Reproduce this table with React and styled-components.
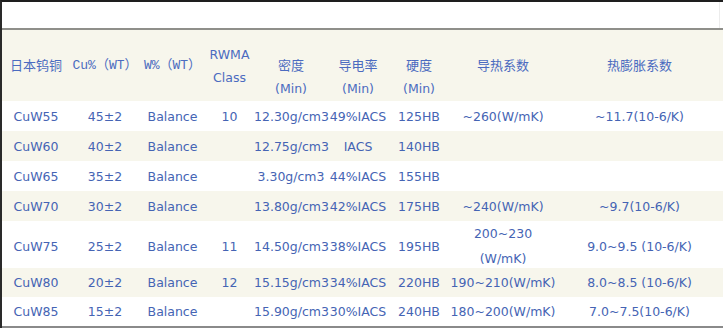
import React from 'react';
import styled, { createGlobalStyle } from 'styled-components';

const GlobalStyle = createGlobalStyle`
  html, body {
    margin: 0;
    padding: 0;
    background: #fff;
  }
  body {
    font-family: 'DejaVu Sans', 'Noto Sans CJK SC', sans-serif;
  }
`;

const COLUMNS = '68px 70px 65px 49px 74px 60px 62px 106px 1fr';

const StyledFrame = styled.div`
  width: 723px;
  height: 328px;
  box-sizing: border-box;
  border-top: 2px solid #1e1e1e;
  border-left: 2px solid #2a2a2a;
  display: flex;
  flex-direction: column;
  overflow: hidden;
`;

const StyledTopStrip = styled.div`
  height: 26px;
  flex-shrink: 0;
  border-right: 1px solid #ececec;
  margin-right: 3px;
`;

const StyledTable = styled.div`
  display: flex;
  flex-direction: column;
  border-top: 2px solid #8f8f8a;
  border-bottom: 2px solid #8a8a8a;
`;

const StyledHeaderRow = styled.div`
  display: grid;
  grid-template-columns: ${COLUMNS};
  align-items: center;
  height: 71px;
  background-color: #f7f6ec;
`;

const StyledHeadCell = styled.div`
  text-align: center;
  white-space: nowrap;
  line-height: 23px;
  color: #4b6bc0;
  font-size: 13px;
  font-family: ${({ $mono }) =>
    $mono
      ? "'Liberation Mono', 'Noto Sans CJK SC', monospace"
      : "'DejaVu Sans', 'Noto Sans CJK SC', sans-serif"};
  padding-top: ${({ $offset }) => ($offset ? '23px' : '0')};
`;

const StyledHeadLine = styled.div`
  font-size: ${({ $latin }) => ($latin ? '12.5px' : '13px')};
`;

const StyledRow = styled.div`
  display: grid;
  grid-template-columns: ${COLUMNS};
  align-items: center;
  height: ${({ $height }) => $height}px;
  background-color: ${({ $alt }) => ($alt ? '#f7f6ec' : '#ffffff')};
`;

const StyledCell = styled.div`
  text-align: center;
  white-space: nowrap;
  font-size: 12.5px;
  line-height: 25px;
  color: #4564b4;
`;

const headers = [
  { label: '日本钨铜' },
  { label: 'Cu%（WT）', mono: true },
  { label: 'W%（WT）', mono: true },
  { lines: ['RWMA', 'Class'] },
  { lines: ['密度', '(Min)'], offset: true },
  { lines: ['导电率', '(Min)'], offset: true },
  { lines: ['硬度', '(Min)'], offset: true },
  { label: '导热系数' },
  { label: '热膨胀系数' }
];

const rows = [
  { height: 30, cells: ['CuW55', '45±2', 'Balance', '10', '12.30g/cm3', '49%IACS', '125HB', '~260(W/mK)', '~11.7(10-6/K)'] },
  { height: 30, cells: ['CuW60', '40±2', 'Balance', '', '12.75g/cm3', 'IACS', '140HB', '', ''] },
  { height: 30, cells: ['CuW65', '35±2', 'Balance', '', ' 3.30g/cm3', '44%IACS', '155HB', '', ''] },
  { height: 30, cells: ['CuW70', '30±2', 'Balance', '', '13.80g/cm3', '42%IACS', '175HB', '~240(W/mK)', '~9.7(10-6/K)'] },
  { height: 47, cells: ['CuW75', '25±2', 'Balance', '11', '14.50g/cm3', '38%IACS', '195HB', ['200~230', '(W/mK)'], '9.0~9.5 (10-6/K)'] },
  { height: 29, cells: ['CuW80', '20±2', 'Balance', '12', '15.15g/cm3', '34%IACS', '220HB', '190~210(W/mK)', '8.0~8.5 (10-6/K)'] },
  { height: 29, cells: ['CuW85', '15±2', 'Balance', '', '15.90g/cm3', '30%IACS', '240HB', '180~200(W/mK)', '7.0~7.5(10-6/K)'] }
];

const renderLines = (value) =>
  Array.isArray(value)
    ? value.map((line, i) => (
        <React.Fragment key={i}>
          {i > 0 && <br />}
          {line}
        </React.Fragment>
      ))
    : value;

const App = () => {
  return (
    <>
      <GlobalStyle />
      <StyledFrame>
        <StyledTopStrip />
        <StyledTable>
          <StyledHeaderRow>
            {headers.map((h, i) => (
              <StyledHeadCell key={i} $mono={h.mono} $offset={h.offset}>
                {h.lines
                  ? h.lines.map((line, j) => (
                      <StyledHeadLine key={j} $latin={/[A-Za-z]/.test(line)}>
                        {line}
                      </StyledHeadLine>
                    ))
                  : h.label}
              </StyledHeadCell>
            ))}
          </StyledHeaderRow>
          {rows.map((row, i) => (
            <StyledRow key={i} $alt={i % 2 === 1} $height={row.height}>
              {row.cells.map((cell, j) => (
                <StyledCell key={j}>{renderLines(cell)}</StyledCell>
              ))}
            </StyledRow>
          ))}
        </StyledTable>
      </StyledFrame>
    </>
  );
};

export default App;
